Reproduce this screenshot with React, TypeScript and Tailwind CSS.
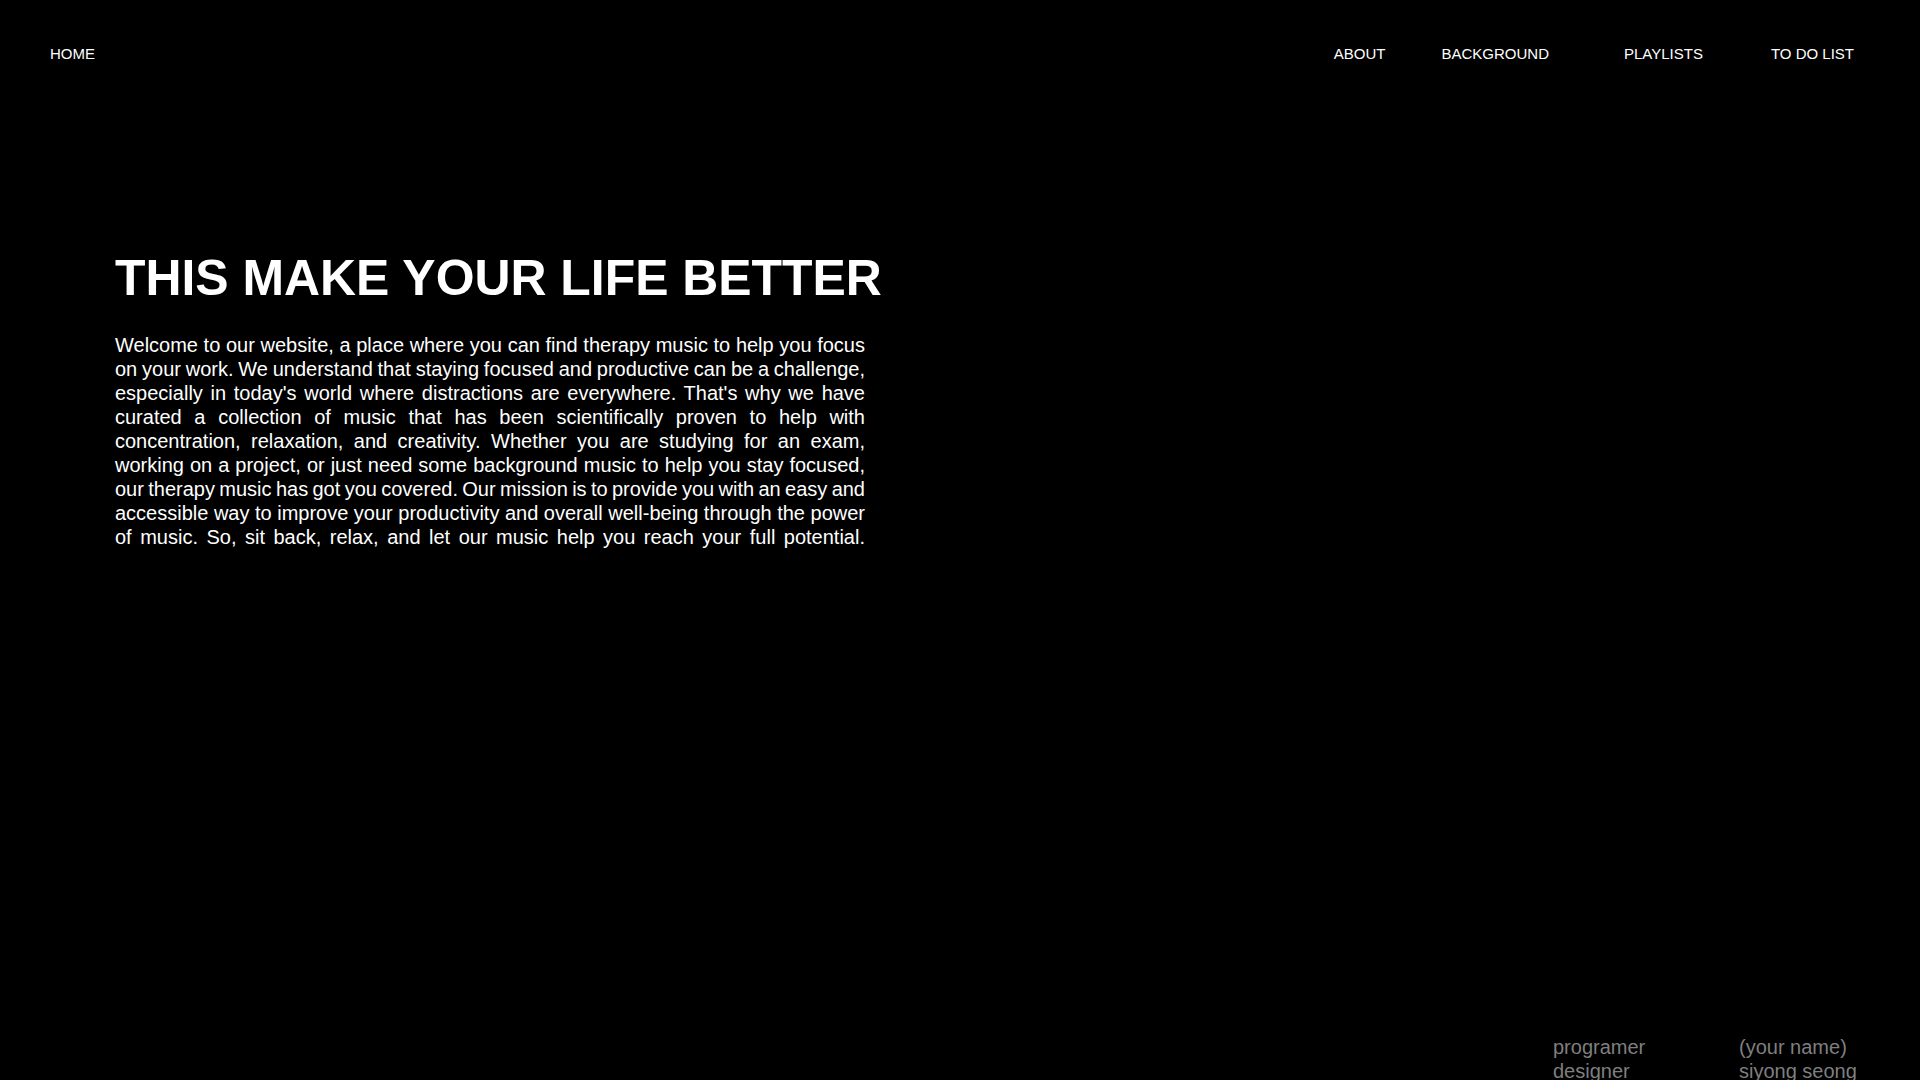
import React from 'react';

const NAV_RIGHT = [
  { label: 'ABOUT', gap: '' },
  { label: 'BACKGROUND', gap: 'ml-[56px]' },
  { label: 'PLAYLISTS', gap: 'ml-[75px]' },
  { label: 'TO DO LIST', gap: 'ml-[68px]' },
];

const INTRO =
  "Welcome to our website, a place where you can find therapy music to help you focus on your work. We understand that staying focused and productive can be a challenge, especially in today's world where distractions are everywhere. That's why we have curated a collection of music that has been scientifically proven to help with concentration, relaxation, and creativity. Whether you are studying for an exam, working on a project, or just need some background music to help you stay focused, our therapy music has got you covered. Our mission is to provide you with an easy and accessible way to improve your productivity and overall well-being through the power of music. So, sit back, relax, and let our music help you reach your full potential.";

const App: React.FC = () => {
  return (
    <div className="h-screen w-full overflow-hidden bg-black text-white font-['Liberation_Sans',Arial,sans-serif]">
      {/* top nav */}
      <nav className="flex items-start justify-between pt-[46px] pl-[50px] pr-[66px] text-[15px] leading-[15px]">
        <a className="cursor-pointer">HOME</a>
        <div className="flex">
          {NAV_RIGHT.map((item) => (
            <a key={item.label} className={`cursor-pointer ${item.gap}`}>
              {item.label}
            </a>
          ))}
        </div>
      </nav>

      {/* hero */}
      <section className="mt-[193px] pl-[115px]">
        <h1 className="text-[49.9px] font-bold leading-none">THIS MAKE YOUR LIFE BETTER</h1>
        <p className="mt-[29px] w-[750px] text-justify [text-align-last:justify] text-[20px] leading-[24px] [word-spacing:-1.5px]">
          {INTRO}
        </p>
      </section>

      {/* credits */}
      <footer className="mt-[486px] flex pl-[1553px] text-[20px] leading-[24px] text-[#7f7f7f]">
        <div className="w-[186px]">
          <div>programer</div>
          <div>designer</div>
        </div>
        <div>
          <div>(your name)</div>
          <div>siyong seong</div>
        </div>
      </footer>
    </div>
  );
};

export default App;
